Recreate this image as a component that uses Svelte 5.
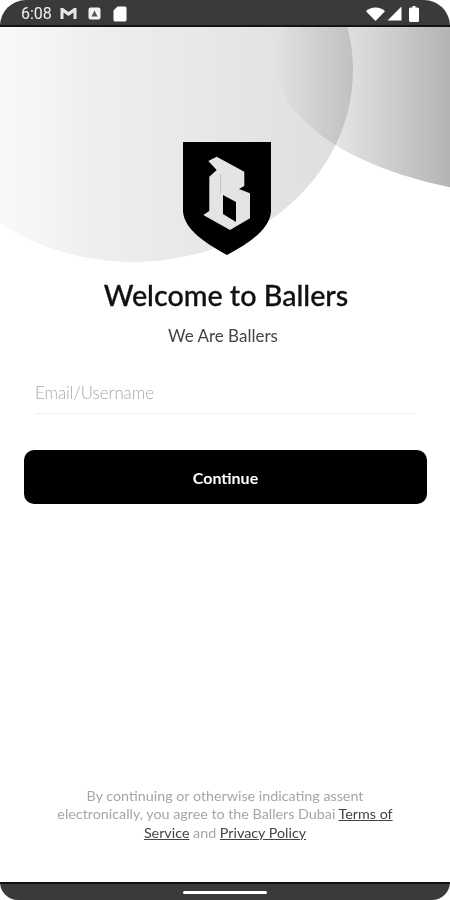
<script lang="ts">
  const footerStart = 'By continuing or otherwise indicating assent electronically, you agree to the Ballers Dubai';
</script>

<div class="phone">
  <!-- status bar -->
  <div class="status-bar">
    <div class="status-left">
      <span class="time">6:08</span>
      <svg width="17" height="13" viewBox="0 0 17 13">
        <path d="M.5 1H3l5.500 4L14 1h2.500v11H13.500V5.500L8.500 9 3.500 5.500V12H.5z" fill="#e6e6e6" />
      </svg>
      <svg class="a-icon" width="13" height="13" viewBox="0 0 13 13">
        <rect x="0.500" y="0.500" width="12" height="12" rx="2" fill="#f2f2f2" />
        <path d="M6.500 3.500 9.500 9.500h-6z" fill="#555" />
      </svg>
      <svg class="sd-icon" width="14" height="16" viewBox="0 0 14 16">
        <path d="M4.500 .5H12a1.500 1.500 0 0 1 1.500 1.500v12A1.500 1.500 0 0 1 12 15.500H2A1.500 1.500 0 0 1 .5 14V4.500z" fill="#fff" />
      </svg>
    </div>
    <div class="status-right">
      <svg class="wifi" width="19" height="14" viewBox="0 0 19 14">
        <path d="M0 4.200C2.500 1.800 5.800.5 9.500.5s7 1.300 9.500 3.700L9.500 14z" fill="#fff" />
      </svg>
      <svg width="15" height="15" viewBox="0 0 15 15">
        <path d="M14.500 .5v14H.5z" fill="#fff" />
      </svg>
      <svg class="battery" width="10" height="16" viewBox="0 0 10 16">
        <path d="M3.500 0h3v1.500h2A1.500 1.500 0 0 1 10 3v11.500A1.500 1.500 0 0 1 8.500 16h-7A1.500 1.500 0 0 1 0 14.500V3a1.500 1.500 0 0 1 1.500-1.500h2z" fill="#fff" />
      </svg>
    </div>
  </div>

  <main class="screen">
    <div class="hero">
      <div class="circle circle-back"></div>
      <div class="circle circle-front"></div>
      <svg class="crest" width="88" height="113" viewBox="0 0 88 113">
        <path d="M0 0H88V70C86 88 66 101 44 113C22 101 2 88 0 70z" fill="#000" />
        <path
          d="M25.300 19 33.700 14.700 61.300 29.700V44L56 47 67 51.300V76.300L47 88 20.300 73 26.300 69V34.700L33.700 28z"
          fill="#e4e4e4"
        />
        <path d="M40 53 53 60V80L40 72z" fill="#000" />
        <path d="M37.500 32V51" stroke="#c4c4c4" stroke-width="1" fill="none" />
      </svg>
    </div>

    <h1>Welcome to Ballers</h1>
    <p class="tagline">We Are Ballers</p>

    <div class="field">Email/Username</div>

    <button class="continue">Continue</button>

    <p class="legal">
      {footerStart} <u>Terms of Service</u> and <u>Privacy Policy</u>
    </p>
  </main>

  <!-- nav bar -->
  <div class="nav-bar"><span class="handle"></span></div>
</div>

<style>
  :global(body) {
    margin: 0;
    background: #fff;
  }

  .phone {
    width: 450px;
    height: 900px;
    display: flex;
    flex-direction: column;
    background: #fff;
    font-family: Lato, 'Noto Sans', sans-serif;
    overflow: hidden;
  }

  .status-bar {
    flex: none;
    display: flex;
    align-items: center;
    justify-content: space-between;
    padding: 2px 31px 0 21px;
    height: 23px;
    background: #3a3a3a;
    border-bottom: 2px solid #141414;
    border-radius: 26px 26px 0 0;
  }

  .status-left,
  .status-right {
    display: flex;
    align-items: center;
  }

  .status-left {
    gap: 8px;
  }

  .a-icon {
    margin-left: 3px;
  }

  .sd-icon {
    margin-left: 4px;
  }

  .status-right {
    gap: 2px;
  }

  .wifi {
    margin-top: 1px;
  }

  .battery {
    margin-left: 5px;
  }

  .time {
    color: #f0f0f0;
    font-size: 16px;
    font-family: Roboto, sans-serif;
  }

  .screen {
    flex: 1;
    min-height: 0;
    background: #fff;
    display: flex;
    flex-direction: column;
    align-items: center;
    overflow: hidden;
  }

  .hero {
    align-self: stretch;
    height: 228px;
    flex: none;
    display: flex;
    justify-content: center;
    align-items: flex-end;
    position: relative;
    padding-left: 4px;
    box-sizing: border-box;
  }

  .circle {
    position: absolute;
    border-radius: 50%;
  }

  .circle-back {
    left: 275px;
    top: -105px;
    width: 570px;
    height: 276px;
    background: linear-gradient(90deg, #fff 0, #b4b4b4 175px);
  }

  .circle-front {
    left: -87px;
    top: -149px;
    width: 440px;
    height: 384px;
    background: linear-gradient(90deg, #f9f9f9 87px, #eeeeee 187px, #e8e8e8 287px, #dedede 427px);
    mix-blend-mode: multiply;
  }

  .crest {
    position: relative;
  }

  h1 {
    margin: 22px 0 0 2px;
    font-size: 28.700px;
    line-height: 36px;
    font-weight: 500;
    color: #111;
    -webkit-text-stroke: 0.3px #111;
  }

  .tagline {
    margin: 12px 4px 0 0;
    font-size: 17px;
    line-height: 22px;
    color: #444;
  }

  .field {
    align-self: stretch;
    margin: 34px 34px 0 35px;
    padding-bottom: 8px;
    font-size: 16.800px;
    line-height: 24px;
    font-weight: 300;
    color: #a8a8a8;
    border-bottom: 1px solid #f0f0f0;
  }

  .continue {
    align-self: stretch;
    margin: 36px 23px 0 24px;
    height: 54px;
    border: none;
    border-radius: 10px;
    background: #000;
    color: #fff;
    font-family: inherit;
    font-size: 16px;
    font-weight: 700;
  }

  .legal {
    margin: auto 50px 40px;
    text-align: center;
    font-size: 14.300px;
    line-height: 18.500px;
    color: #a6a6a6;
  }

  .legal u {
    color: #444;
  }

  .nav-bar {
    height: 16px;
    flex: none;
    background: #3a3a3a;
    border-top: 2px solid #111;
    border-radius: 0 0 24px 24px;
    display: flex;
    justify-content: center;
    align-items: flex-start;
  }

  .handle {
    width: 84px;
    height: 3px;
    margin-top: 7px;
    background: #fff;
    border-radius: 2px;
  }
</style>
